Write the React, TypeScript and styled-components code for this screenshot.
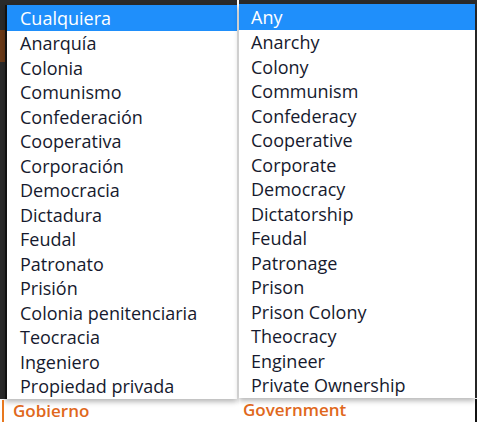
import React from "react";
import styled, { createGlobalStyle } from "styled-components";

const Global = createGlobalStyle`
  html, body { margin: 0; padding: 0; background: #ffffff; }
  body { width: 477px; height: 422px; overflow: hidden; font-family: "Open Sans", "Noto Sans", sans-serif; }
`;

const Page = styled.div`
  display: flex;
  width: 477px;
  height: 422px;
  gap: 2px;
`;

const Panel = styled.div<{ $w: number }>`
  width: ${(p) => p.$w}px;
  display: flex;
  flex-direction: column;
  background: #ffffff;
`;

const Top = styled.div<{ $left: boolean }>`
  display: flex;
  background: ${(p) =>
    p.$left
      ? "linear-gradient(180deg, #2a2a2a 0 30px, #6b3a18 30px 62px, #2a2a2a 62px 100%)"
      : "#2a2a2a"};
  padding-top: ${(p) => (p.$left ? 5 : 4)}px;
  padding-left: ${(p) => (p.$left ? 5 : 0)}px;
  padding-right: ${(p) => (p.$left ? 0 : 2)}px;
`;

const List = styled.ul<{ $left: boolean }>`
  list-style: none;
  margin: 0;
  padding: 0;
  flex: 1;
  background: #ffffff;
  border-left: ${(p) => (p.$left ? "2px solid #111" : "none")};
  box-shadow: 0 3px 5px rgba(0, 0, 0, 0.28);
`;

const Item = styled.li<{ $sel?: boolean; $indent: number }>`
  height: ${(p) => (p.$sel ? 26 : 24.5)}px;
  line-height: ${(p) => (p.$sel ? 26 : 24.5)}px;
  padding-left: ${(p) => p.$indent}px;
  font-size: 18px;
  color: ${(p) => (p.$sel ? "#ffffff" : "#161a2e")};
  background: ${(p) => (p.$sel ? "#1f8ffb" : "transparent")};
  white-space: nowrap;
`;

const Footer = styled.div<{ $left: boolean }>`
  flex: 1;
  display: flex;
  align-items: flex-end;
  padding-left: ${(p) => (p.$left ? 2 : 0)}px;
`;

const Label = styled.div<{ $left: boolean }>`
  font-size: 17px;
  font-weight: 600;
  color: #e0681c;
  line-height: 22px;
  padding-left: ${(p) => (p.$left ? 9 : 4)}px;
  padding-bottom: ${(p) => (p.$left ? 0 : 1)}px;
  border-left: ${(p) => (p.$left ? "2px solid #e8781e" : "none")};
  width: 100%;
  box-sizing: border-box;
  border-right: ${(p) => (p.$left ? "none" : "2px solid #111")};
`;

const es = [
  "Cualquiera",
  "Anarquía",
  "Colonia",
  "Comunismo",
  "Confederación",
  "Cooperativa",
  "Corporación",
  "Democracia",
  "Dictadura",
  "Feudal",
  "Patronato",
  "Prisión",
  "Colonia penitenciaria",
  "Teocracia",
  "Ingeniero",
  "Propiedad privada",
];

const en = [
  "Any",
  "Anarchy",
  "Colony",
  "Communism",
  "Confederacy",
  "Cooperative",
  "Corporate",
  "Democracy",
  "Dictatorship",
  "Feudal",
  "Patronage",
  "Prison",
  "Prison Colony",
  "Theocracy",
  "Engineer",
  "Private Ownership",
];

function Dropdown({ items, label, left, w }: { items: string[]; label: string; left: boolean; w: number }) {
  return (
    <Panel $w={w}>
      <Top $left={left}>
        <List $left={left}>
          {items.map((t, i) => (
            <Item key={t} $sel={i === 0} $indent={left ? 13 : 12}>
              {t}
            </Item>
          ))}
        </List>
      </Top>
      <Footer $left={left}>
        <Label $left={left}>{label}</Label>
      </Footer>
    </Panel>
  );
}

export default function App() {
  return (
    <>
      <Global />
      <Page>
        <Dropdown items={es} label="Gobierno" left w={237} />
        <Dropdown items={en} label="Government" left={false} w={238} />
      </Page>
    </>
  );
}
